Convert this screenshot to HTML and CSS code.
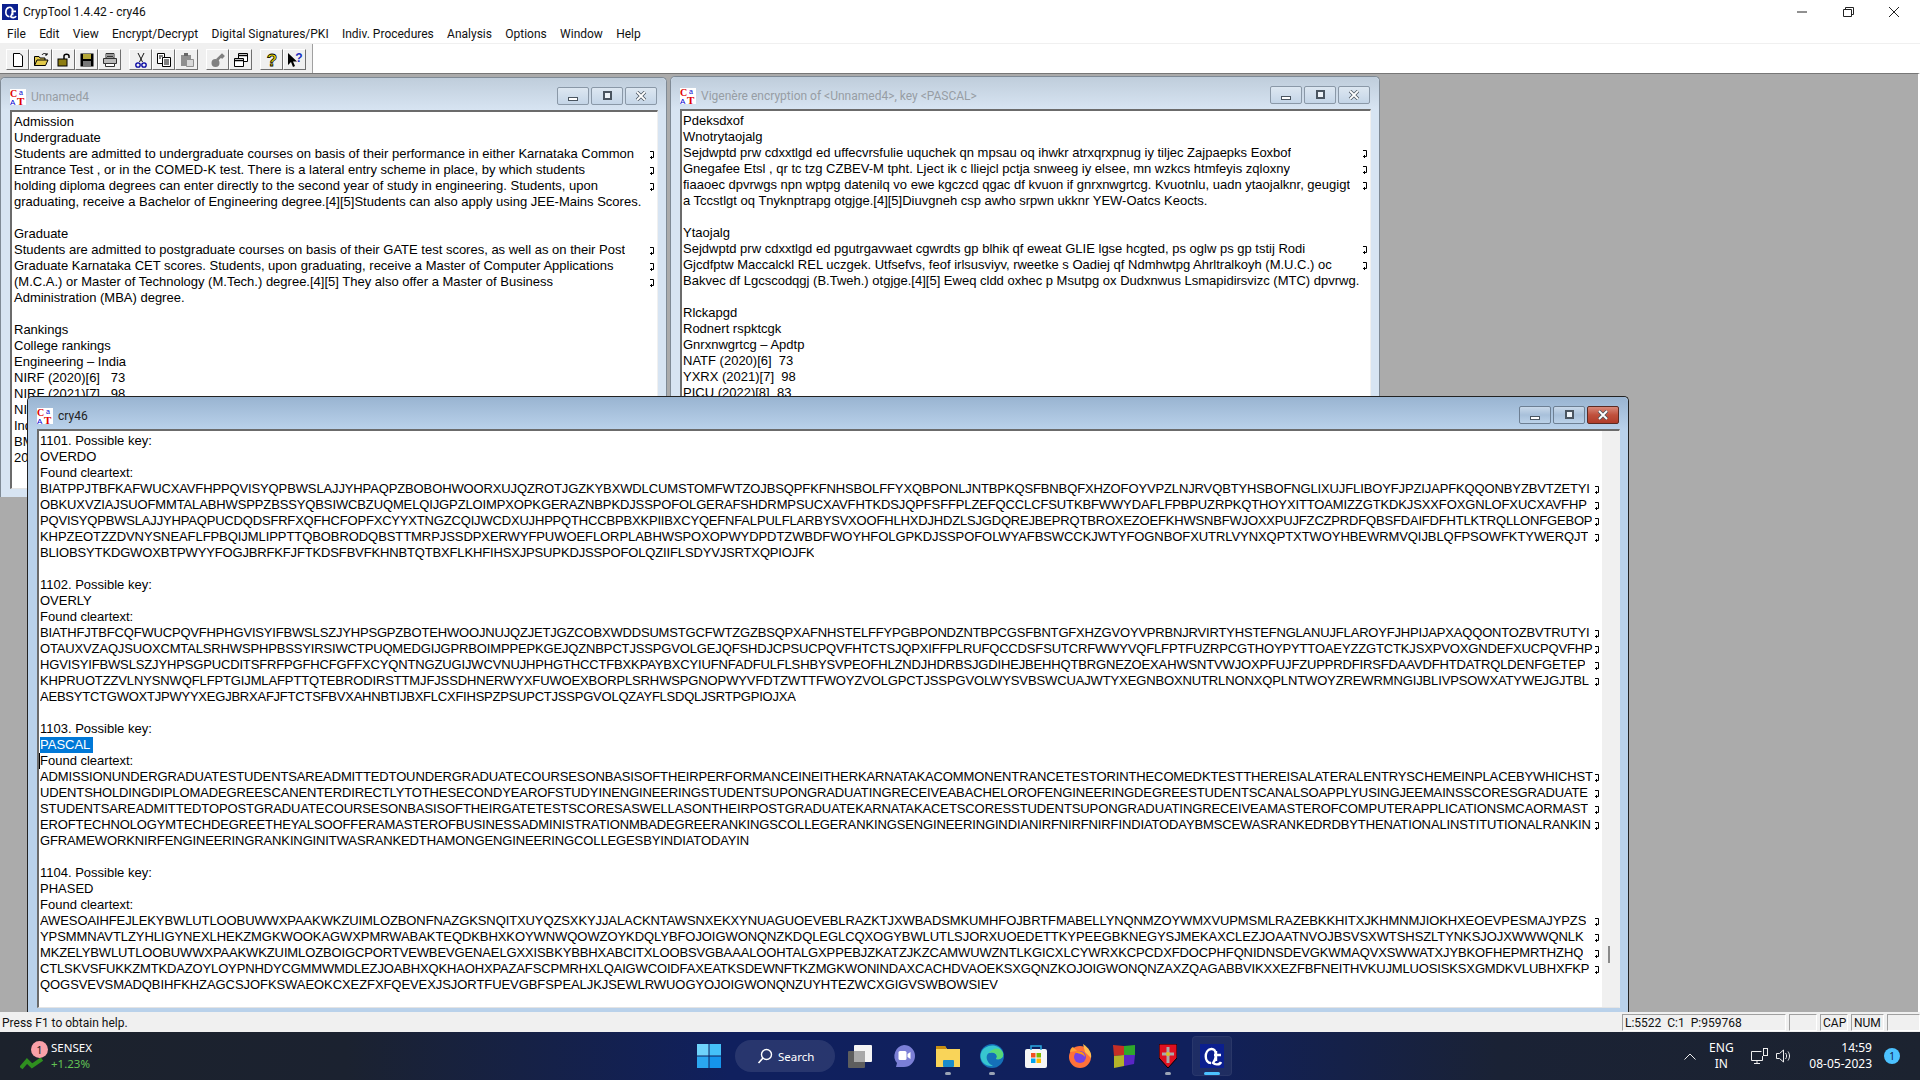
FILE: index.html
```html
<!DOCTYPE html>
<html lang="en">
<head>
    <meta charset="UTF-8">
    <title>CrypTool 1.4.42 - cry46</title>
    <link rel="stylesheet" href="styles.css">
</head>
<body>
    <svg class="defs" width="0" height="0">
        <symbol id="wrap" viewBox="0 0 6 10">
            <path d="M1 1.500H4.500V7.500H1M2.500 6V9" fill="none" stroke="#000" stroke-width="1"/>
        </symbol>
        <symbol id="cat" viewBox="0 0 16 16">
            <rect width="16" height="16" fill="#fff"/>
            <text x="0" y="8" font-family="Liberation Serif" font-weight="bold" font-size="10" fill="#e00000">C</text>
            <text x="9" y="6" font-family="Liberation Sans" font-size="7" fill="#0000d0">a</text>
            <text x="0" y="16" font-family="Liberation Sans" font-size="8" fill="#0000d0">A</text>
            <text x="7" y="16" font-family="Liberation Serif" font-weight="bold" font-size="11" fill="#e00000">T</text>
        </symbol>
        <symbol id="ctlogo" viewBox="0 0 24 24">
            <rect width="24" height="24" fill="#0b1f8f"/>
            <path d="M11 19C4 19 4 6 11 5C17 4 17 14 13 19C15 21 20 21 21 18M16 7V17M14 11H21" fill="none" stroke="#fff" stroke-width="2.400"/>
        </symbol>
        <symbol id="xmark" viewBox="0 0 12 10">
            <path d="M2 1L10 9M10 1L2 9" fill="none" stroke="#4a5560" stroke-width="3.400"/>
            <path d="M2 1L10 9M10 1L2 9" fill="none" stroke="#fff" stroke-width="1.800"/>
        </symbol>
    </svg>

    <div class="app">
        <header class="titlebar">
            <svg class="app-icon"><use href="#ctlogo"/></svg>
            <span class="app-title">CrypTool 1.4.42 - cry46</span>
            <div class="sys-btns">
                <svg width="46" height="20" viewBox="0 0 46 20"><path d="M18 10H28" stroke="#222"/></svg>
                <svg width="46" height="20" viewBox="0 0 46 20"><path d="M18.500 7.500H26.500V14.500H18.500ZM20.500 7V5.500H28.500V12.500H27" fill="none" stroke="#222"/></svg>
                <svg width="46" height="20" viewBox="0 0 46 20"><path d="M18 5L28 15M28 5L18 15" fill="none" stroke="#222"/></svg>
            </div>
        </header>

        <nav class="menubar">
            <span>File</span><span>Edit</span><span>View</span><span>Encrypt/Decrypt</span><span>Digital Signatures/PKI</span><span>Indiv. Procedures</span><span>Analysis</span><span>Options</span><span>Window</span><span>Help</span>
        </nav>

        <div class="toolbar">
            <div class="tool-group">
                <button class="tool"><svg viewBox="0 0 16 16"><path d="M3.500 1.500H10L12.500 4V14.500H3.500Z" fill="#fff" stroke="#000"/></svg></button>
                <button class="tool"><svg viewBox="0 0 16 16"><path d="M1.500 13.500V4.500H6L7 6H12V8M1.500 13.500L4 8H15L12.500 13.500Z" fill="#e2c94a" stroke="#000"/><path d="M9 3C10 1 13 1 14 3M14 3V1M14 3H12" fill="none" stroke="#000"/></svg></button>
                <button class="tool"><svg viewBox="0 0 16 16"><rect x="2" y="7" width="9" height="7" fill="#8d7d12" stroke="#000"/><path d="M8 7V4C8 1.500 13 1.500 13 4V6" fill="none" stroke="#000" stroke-width="1.500"/></svg></button>
                <button class="tool"><svg viewBox="0 0 16 16"><rect x="1.500" y="1.500" width="13" height="13" fill="#000"/><rect x="4" y="2" width="8" height="5" fill="#b5a838"/><rect x="4" y="9" width="8" height="5" fill="#777"/></svg></button>
                <button class="tool"><svg viewBox="0 0 16 16"><path d="M4 1.500H12V6H4Z" fill="#fff" stroke="#333"/><path d="M1.500 6.500H14.500V11.500H1.500Z" fill="#bbb" stroke="#333"/><path d="M3.500 11.500H12.500V14.500H3.500Z" fill="#fff" stroke="#333"/><path d="M5 3H11M5 4.500H11" stroke="#333"/></svg></button>
            </div>
            <div class="tool-group">
                <button class="tool"><svg viewBox="0 0 16 16"><path d="M5 1L9.500 10M11 1L6.500 10" stroke="#111" fill="none"/><circle cx="5" cy="13" r="2.200" fill="none" stroke="#0000a0" stroke-width="1.300"/><circle cx="11" cy="13" r="2.200" fill="none" stroke="#0000a0" stroke-width="1.300"/></svg></button>
                <button class="tool"><svg viewBox="0 0 16 16"><path d="M1.500 1.500H8.500V11.500H1.500Z" fill="#fff" stroke="#000"/><path d="M6.500 5.500H14.500V14.500H6.500Z" fill="#fff" stroke="#000"/><path d="M3 4H7M3 6H5M8 8H13M8 10H13M8 12H13" stroke="#000"/></svg></button>
                <button class="tool"><svg viewBox="0 0 16 16"><path d="M2 3H12V14H2Z" fill="#8f8f8f"/><path d="M5 1H9V4H5Z" fill="#666"/><path d="M7.500 7.500H14.500V14.500H7.500Z" fill="#d8d8d8" stroke="#8f8f8f"/></svg></button>
            </div>
            <div class="tool-group">
                <button class="tool"><svg viewBox="0 0 16 16"><circle cx="5.500" cy="11" r="4" fill="#808080"/><path d="M7 8L12 3L14 5M11 4L13 6" stroke="#808080" stroke-width="2.500" fill="none"/></svg></button>
                <button class="tool"><svg viewBox="0 0 16 16"><path d="M5.500 1.500H14.500V9.500H5.500Z" fill="#fff" stroke="#000"/><path d="M5.500 3.500H14.500" stroke="#000" stroke-width="1.500"/><path d="M1.500 6.500H10.500V14.500H1.500Z" fill="#fff" stroke="#000"/><path d="M1.500 8.500H10.500" stroke="#000" stroke-width="1.500"/></svg></button>
            </div>
            <div class="tool-group">
                <button class="tool"><svg viewBox="0 0 16 16"><text x="8" y="14" text-anchor="middle" font-family="Liberation Sans" font-weight="bold" font-size="17" fill="#f4e400" stroke="#000" stroke-width="0.800">?</text></svg></button>
                <button class="tool"><svg viewBox="0 0 16 16"><path d="M1 1V13L4 10L6 15L8 14L6 9.500H10Z" fill="#000"/><text x="12" y="10" text-anchor="middle" font-family="Liberation Sans" font-weight="bold" font-size="12" fill="#1a2ec0">?</text></svg></button>
            </div>
        </div>

        <main class="workspace">
            <!-- back window left -->
            <section class="mdi-win inactive win-unnamed">
                <div class="win-title">
                    <svg class="cat-icon"><use href="#cat"/></svg>
                    <span>Unnamed4</span>
                    <div class="win-btns">
                        <button class="win-btn min"><i></i></button><button class="win-btn max"><i></i></button><button class="win-btn close"><svg><use href="#xmark"/></svg></button>
                    </div>
                </div>
                <div class="win-body">
                    <div class="line">Admission</div>
                    <div class="line">Undergraduate</div>
                    <div class="line"><span>Students are admitted to undergraduate courses on basis of their performance in either Karnataka Common</span><svg class="mark"><use href="#wrap"/></svg></div>
                    <div class="line"><span>Entrance Test , or in the COMED-K test. There is a lateral entry scheme in place, by which students</span><svg class="mark"><use href="#wrap"/></svg></div>
                    <div class="line"><span>holding diploma degrees can enter directly to the second year of study in engineering. Students, upon</span><svg class="mark"><use href="#wrap"/></svg></div>
                    <div class="line">graduating, receive a Bachelor of Engineering degree.[4][5]Students can also apply using JEE-Mains Scores.</div>
                    <div class="line"></div>
                    <div class="line">Graduate</div>
                    <div class="line"><span>Students are admitted to postgraduate courses on basis of their GATE test scores, as well as on their Post</span><svg class="mark"><use href="#wrap"/></svg></div>
                    <div class="line"><span>Graduate Karnataka CET scores. Students, upon graduating, receive a Master of Computer Applications</span><svg class="mark"><use href="#wrap"/></svg></div>
                    <div class="line"><span>(M.C.A.) or Master of Technology (M.Tech.) degree.[4][5] They also offer a Master of Business</span><svg class="mark"><use href="#wrap"/></svg></div>
                    <div class="line">Administration (MBA) degree.</div>
                    <div class="line"></div>
                    <div class="line">Rankings</div>
                    <div class="line">College rankings</div>
                    <div class="line">Engineering – India</div>
                    <div class="line">NIRF (2020)[6]   73</div>
                    <div class="line">NIRF (2021)[7]   98</div>
                    <div class="line">NIRF (2022)[8]   83</div>
                    <div class="line">India Today</div>
                    <div class="line">BMSCE</div>
                    <div class="line">2022</div>
                </div>
            </section>

            <!-- back window right -->
            <section class="mdi-win inactive win-vigenere">
                <div class="win-title">
                    <svg class="cat-icon"><use href="#cat"/></svg>
                    <span>Vigenère encryption of &lt;Unnamed4&gt;, key &lt;PASCAL&gt;</span>
                    <div class="win-btns">
                        <button class="win-btn min"><i></i></button><button class="win-btn max"><i></i></button><button class="win-btn close"><svg><use href="#xmark"/></svg></button>
                    </div>
                </div>
                <div class="win-body">
                    <div class="line">Pdeksdxof</div>
                    <div class="line">Wnotrytaojalg</div>
                    <div class="line"><span>Sejdwptd prw cdxxtlgd ed uffecvrsfulie uquchek qn mpsau oq ihwkr atrxqrxpnug iy tiljec Zajpaepks Eoxbof</span><svg class="mark"><use href="#wrap"/></svg></div>
                    <div class="line"><span>Gnegafee Etsl , qr tc tzg CZBEV-M tpht. Lject ik c lliejcl pctja snweeg iy elsee, mn wzkcs htmfeyis zqloxny</span><svg class="mark"><use href="#wrap"/></svg></div>
                    <div class="line"><span>fiaaoec dpvrwgs npn wptpg datenilq vo ewe kgczcd qgac df kvuon if gnrxnwgrtcg. Kvuotnlu, uadn ytaojalknr, geugigt</span><svg class="mark"><use href="#wrap"/></svg></div>
                    <div class="line">a Tccstlgt oq Tnyknptrapg otgjge.[4][5]Diuvgneh csp awho srpwn ukknr YEW-Oatcs Keocts.</div>
                    <div class="line"></div>
                    <div class="line">Ytaojalg</div>
                    <div class="line"><span>Sejdwptd prw cdxxtlgd ed pgutrgavwaet cgwrdts gp blhik qf eweat GLIE lgse hcgted, ps oglw ps gp tstij Rodi</span><svg class="mark"><use href="#wrap"/></svg></div>
                    <div class="line"><span>Gjcdfptw Maccalckl REL uczgek. Utfsefvs, feof irlsusviyv, rweetke s Oadiej qf Ndmhwtpg Ahrltralkoyh (M.U.C.) oc</span><svg class="mark"><use href="#wrap"/></svg></div>
                    <div class="line">Bakvec df Lgcscodqgj (B.Tweh.) otgjge.[4][5] Eweq cldd oxhec p Msutpg ox Dudxnwus Lsmapidirsvizc (MTC) dpvrwg.</div>
                    <div class="line"></div>
                    <div class="line">Rlckapgd</div>
                    <div class="line">Rodnert rspktcgk</div>
                    <div class="line">Gnrxnwgrtcg – Apdtp</div>
                    <div class="line">NATF (2020)[6]  73</div>
                    <div class="line">YXRX (2021)[7]  98</div>
                    <div class="line">PICU (2022)[8]  83</div>
                </div>
            </section>

            <!-- active window -->
            <section class="mdi-win win-cry">
                <div class="win-title">
                    <svg class="cat-icon"><use href="#cat"/></svg>
                    <span>cry46</span>
                    <div class="win-btns">
                        <button class="win-btn min"><i></i></button><button class="win-btn max"><i></i></button><button class="win-btn close"><svg><use href="#xmark"/></svg></button>
                    </div>
                </div>
                <div class="win-body has-scroll">
                    <div class="scroll-text">
                        <div class="line">1101. Possible key:</div>
                        <div class="line">OVERDO</div>
                        <div class="line">Found cleartext:</div>
                        <div class="line"><span class="fit-c">BIATPPJTBFKAFWUCXAVFHPPQVISYQPBWSLAJJYHPAQPZBOBOHWOORXUJQZROTJGZKYBXWDLCUMSTOMFWTZOJBSQPFKFNHSBOLFFYXQBPONLJNTBPKQSFBNBQFXHZOFOYVPZLNJRVQBTYHSBOFNGLIXUJFLIBOYFJPZIJAPFKQQONBYZBVTZETYI</span><svg class="mark"><use href="#wrap"/></svg></div>
                        <div class="line"><span class="fit-c">OBKUXVZIAJSUOFMMTALABHWSPPZBSSYQBSIWCBZUQMELQIJGPZLOIMPXOPKGERAZNBPKDJSSPOFOLGERAFSHDRMPSUCXAVFHTKDSJQPFSFFPLZEFQCCLCFSUTKBFWWYDAFLFPBPUZRPKQTHOYXITTOAMIZZGTKDKJSXXFOXGNLOFXUCXAVFHP</span><svg class="mark"><use href="#wrap"/></svg></div>
                        <div class="line"><span class="fit-e">PQVISYQPBWSLAJJYHPAQPUCDQDSFRFXQFHCFOPFXCYYXTNGZCQIJWCDXUJHPPQTHCCBPBXKPIIBXCYQEFNFALPULFLARBYSVXOOFHLHXDJHDZLSJGDQREJBEPRQTBROXEZOEFKHWSNBFWJOXXPUJFZCZPRDFQBSFDAIFDFHTLKTRQLLONFGEBOP</span><svg class="mark"><use href="#wrap"/></svg></div>
                        <div class="line"><span class="fit-a">KHPZEOTZZDVNYSNEAFLFPBQIJMLIPPTTQBOBRODQBSTTMRPJSSDPXERWYFPUWOEFLORPLABHWSPOXOPWYDPDTZWBDFWOYHFOLGPKDJSSPOFOLWYAFBSWCCKJWTYFOGNBOFXUTRLVYNXQPTXTWOYHBEWRMVQIJBLQFPSOWFKTYWERQJT</span><svg class="mark"><use href="#wrap"/></svg></div>
                        <div class="line"><span class="fit-d">BLIOBSYTKDGWOXBTPWYYFOGJBRFKFJFTKDSFBVFKHNBTQTBXFLKHFIHSXJPSUPKDJSSPOFOLQZIIFLSDYVJSRTXQPIOJFK</span></div>
                        <div class="line"></div>
                        <div class="line">1102. Possible key:</div>
                        <div class="line">OVERLY</div>
                        <div class="line">Found cleartext:</div>
                        <div class="line"><span class="fit-e">BIATHFJTBFCQFWUCPQVFHPHGVISYIFBWSLSZJYHPSGPZBOTEHWOOJNUJQZJETJGZCOBXWDDSUMSTGCFWTZGZBSQPXAFNHSTELFFYPGBPONDZNTBPCGSFBNTGFXHZGVOYVPRBNJRVIRTYHSTEFNGLANUJFLAROYFJHPIJAPXAQQONTOZBVTRUTYI</span><svg class="mark"><use href="#wrap"/></svg></div>
                        <div class="line"><span class="fit-d">OTAUXVZAQJSUOXCMTALSRHWSPHPBSSYIRSIWCTPUQMEDGIJGPRBOIMPPEPKGEJQZNBPCTJSSPGVOLGEJQFSHDJCPSUCPQVFHTCTSJQPXIFFPLRUFQCCDSFSUTCRFWWYVQFLFPTFUZRPCGTHOYPYTTOAEYZZGTCTKJSXPVOXGNDEFXUCPQVFHP</span><svg class="mark"><use href="#wrap"/></svg></div>
                        <div class="line"><span class="fit-d">HGVISYIFBWSLSZJYHPSGPUCDITSFRFPGFHCFGFFXCYQNTNGZUGIJWCVNUJHPHGTHCCTFBXKPAYBXCYIUFNFADFULFLSHBYSVPEOFHLZNDJHDRBSJGDIHEJBEHHQTBRGNEZOEXAHWSNTVWJOXPFUJFZUPPRDFIRSFDAAVDFHTDATRQLDENFGETEP</span><svg class="mark"><use href="#wrap"/></svg></div>
                        <div class="line"><span class="fit-c">KHPRUOTZZVLNYSNWQFLFPTGIJMLAFPTTQTEBRODIRSTTMJFJSSDHNERWYXFUWOEXBORPLSRHWSPGNOPWYVFDTZWTTFWOYZVOLGPCTJSSPGVOLWYSVBSWCUAJWTYXEGNBOXNUTRLNONXQPLNTWOYZREWRMNGIJBLIVPSOWXATYWEJGJTBL</span><svg class="mark"><use href="#wrap"/></svg></div>
                        <div class="line"><span class="fit-f">AEBSYTCTGWOXTJPWYYXEGJBRXAFJFTCTSFBVXAHNBTIJBXFLCXFIHSPZPSUPCTJSSPGVOLQZAYFLSDQLJSRTPGPIOJXA</span></div>
                        <div class="line"></div>
                        <div class="line">1103. Possible key:</div>
                        <div class="line"><mark class="sel">PASCAL </mark></div>
                        <div class="line caret">Found cleartext:</div>
                        <div class="line"><span class="fit-c">ADMISSIONUNDERGRADUATESTUDENTSAREADMITTEDTOUNDERGRADUATECOURSESONBASISOFTHEIRPERFORMANCEINEITHERKARNATAKACOMMONENTRANCETESTORINTHECOMEDKTESTTHEREISALATERALENTRYSCHEMEINPLACEBYWHICHST</span><svg class="mark"><use href="#wrap"/></svg></div>
                        <div class="line"><span class="fit-c">UDENTSHOLDINGDIPLOMADEGREESCANENTERDIRECTLYTOTHESECONDYEAROFSTUDYINENGINEERINGSTUDENTSUPONGRADUATINGRECEIVEABACHELOROFENGINEERINGDEGREESTUDENTSCANALSOAPPLYUSINGJEEMAINSSCORESGRADUATE</span><svg class="mark"><use href="#wrap"/></svg></div>
                        <div class="line"><span class="fit-b">STUDENTSAREADMITTEDTOPOSTGRADUATECOURSESONBASISOFTHEIRGATETESTSCORESASWELLASONTHEIRPOSTGRADUATEKARNATAKACETSCORESSTUDENTSUPONGRADUATINGRECEIVEAMASTEROFCOMPUTERAPPLICATIONSMCAORMAST</span><svg class="mark"><use href="#wrap"/></svg></div>
                        <div class="line"><span class="fit-c">EROFTECHNOLOGYMTECHDEGREETHEYALSOOFFERAMASTEROFBUSINESSADMINISTRATIONMBADEGREERANKINGSCOLLEGERANKINGSENGINEERINGINDIANIRFNIRFNIRFINDIATODAYBMSCEWASRANKEDRDBYTHENATIONALINSTITUTIONALRANKIN</span><svg class="mark"><use href="#wrap"/></svg></div>
                        <div class="line"><span class="fit-c">GFRAMEWORKNIRFENGINEERINGRANKINGINITWASRANKEDTHAMONGENGINEERINGCOLLEGESBYINDIATODAYIN</span></div>
                        <div class="line"></div>
                        <div class="line">1104. Possible key:</div>
                        <div class="line">PHASED</div>
                        <div class="line">Found cleartext:</div>
                        <div class="line"><span class="fit-b">AWESOAIHFEJLEKYBWLUTLOOBUWWXPAAKWKZUIMLOZBONFNAZGKSNQITXUYQZSXKYJJALACKNTAWSNXEKXYNUAGUOEVEBLRAZKTJXWBADSMKUMHFOJBRTFMABELLYNQNMZOYWMXVUPMSMLRAZEBKKHITXJKHMNMJIOKHXEOEVPESMAJYPZS</span><svg class="mark"><use href="#wrap"/></svg></div>
                        <div class="line"><span class="fit-a">YPSMMNAVTLZYHLIGYNEXLHEKZMGKWOOKAGWXPMRWABAKTEQDKBHXKOYWNWQOWZOYKDQLYBFOJOIGWONQNZKDQLEGLCQXOGYBWLUTLSJORXUOEDETTKYPEEGBKNEGYSJMEKAXCLEZJOAATNVOJBSVSXWTSHSZLTYNKSJOJXWWWQNLK</span><svg class="mark"><use href="#wrap"/></svg></div>
                        <div class="line"><span class="fit-c">MKZELYBWLUTLOOBUWWXPAAKWKZUIMLOZBOIGCPORTVEWBEVGENAELGXXISBKYBBHXABCITXLOOBSVGBAAALOOHTALGXPPEBJZKATZJKZCAMWUWZNTLKGICXLCYWRXKCPCDXFDOCPHFQNIDNSDEVGKWMAQVXSWWATXJYBKOFHEPMRTHZHQ</span><svg class="mark"><use href="#wrap"/></svg></div>
                        <div class="line"><span class="fit-d">CTLSKVSFUKKZMTKDAZOYLOYPNHDYCGMMWMDLEZJOABHXQKHAOHXPAZAFSCPMRHXLQAIGWCOIDFAXEATKSDEWNFTKZMGKWONINDAXCACHDVAOEKSXGQNZKOJOIGWONQNZAXZQAGABBVIKXXEZFBFNEITHVKUJMLUOSISKSXGMDKVLUBHXFKP</span><svg class="mark"><use href="#wrap"/></svg></div>
                        <div class="line"><span class="fit-a">QOGSVEVSMADQBIHFKHZAGCSJOFKSWAEOKCXEZFXFQEVEXJSJORTFUEVGBFSPEALJKJSEWLRWUOGYOJOIGWONQNZUYHTEZWCXGIGVSWBOWSIEV</span></div>
                    </div>
                    <div class="scrollbar"><div class="thumb"></div></div>
                </div>
            </section>
        </main>

        <footer class="statusbar">
            <span class="status-msg">Press F1 to obtain help.</span>
            <span class="panel p-pos">L:5522&nbsp;&nbsp;C:1&nbsp;&nbsp;P:959768</span>
            <span class="panel p-blank"></span>
            <span class="panel p-cap">CAP</span>
            <span class="panel p-num">NUM</span>
            <span class="panel p-last"></span>
        </footer>

        <div class="taskbar">
            <div class="widget">
                <div class="widget-icon">
                    <svg width="24" height="14" viewBox="0 0 24 14"><path d="M1 12L7 5L12 10L22 3" fill="none" stroke="#2f8f1f" stroke-width="4"/></svg>
                    <span class="widget-badge">1</span>
                </div>
                <div class="widget-text">
                    <span>SENSEX</span>
                    <span class="up">+1.23%</span>
                </div>
            </div>

            <div class="task-center">
                <div class="task-item">
                    <svg width="24" height="24" viewBox="0 0 24 24"><rect width="11.500" height="11.500" fill="#6fd3fb"/><rect x="12.500" width="11.500" height="11.500" fill="#45c0f9"/><rect y="12.500" width="11.500" height="11.500" fill="#2aa6f0"/><rect x="12.500" y="12.500" width="11.500" height="11.500" fill="#1594ec"/></svg>
                </div>
                <div class="search-pill">
                    <svg width="16" height="16" viewBox="0 0 16 16"><circle cx="9.500" cy="6.500" r="5" fill="none" stroke="#fff" stroke-width="1.400"/><path d="M6 10L1.500 15" stroke="#fff" stroke-width="1.600"/></svg>
                    <span>Search</span>
                </div>
                <div class="task-item">
                    <svg width="24" height="24" viewBox="0 0 24 24"><rect y="7" width="17" height="17" rx="1" fill="#5e5e5e"/><rect x="6" y="1" width="18" height="17" rx="1" fill="#f4f4f4"/><rect x="6" y="7" width="11" height="11" fill="#a9a9a9"/></svg>
                </div>
                <div class="task-item">
                    <svg width="24" height="24" viewBox="0 0 24 24"><path d="M12 1A11 11 0 1 1 12 23H4L5 19A11 11 0 0 1 12 1Z" fill="#7b7fd6"/><rect x="6.500" y="7" width="8" height="9" rx="1.500" fill="#fff"/><path d="M15.500 10L18.500 8V15L15.500 13Z" fill="#fff"/></svg>
                </div>
                <div class="task-item has-dot">
                    <svg width="24" height="24" viewBox="0 0 24 24"><path d="M0 2H9L11 5H24V23H0Z" fill="#f9d459"/><path d="M0 2H9L11 5H0Z" fill="#c98f12"/><rect x="7" y="16" width="11" height="7" rx="1" fill="#1a8ccc"/></svg>
                    <i class="dot"></i>
                </div>
                <div class="task-item has-dot">
                    <svg width="24" height="24" viewBox="0 0 24 24"><circle cx="12" cy="12" r="12" fill="#1570b8"/><path d="M1 9C4 0 19 -2 23 9C24 14 20 16 16 15C19 11 14 7 9 9C5 11 6 19 13 22C4 23 -1 16 1 9Z" fill="#37c6d0"/><path d="M23 9C24 14 20 16 16 15C19 11 14 7 9 9C13 3 21 3 23 9Z" fill="#57d977"/></svg>
                    <i class="dot"></i>
                </div>
                <div class="task-item">
                    <svg width="24" height="24" viewBox="0 0 24 24"><rect x="1" y="5" width="22" height="19" rx="2" fill="#f6f6f6"/><path d="M7 6V2H17V6" fill="none" stroke="#2aa8e0" stroke-width="1.500"/><rect x="7" y="9" width="4.500" height="4.500" fill="#f25022"/><rect x="12.500" y="9" width="4.500" height="4.500" fill="#7fba00"/><rect x="7" y="14.500" width="4.500" height="4.500" fill="#00a4ef"/><rect x="12.500" y="14.500" width="4.500" height="4.500" fill="#ffb900"/></svg>
                </div>
                <div class="task-item">
                    <svg width="24" height="24" viewBox="0 0 24 24"><circle cx="12" cy="13" r="11" fill="#ff7139"/><path d="M15 0C21 4 24 9 23 14L17 8Z" fill="#ffbd4f"/><path d="M2 8C2 4 5 3 5 3L9 7Z" fill="#ffa436"/><circle cx="12" cy="13" r="6" fill="#7542e5"/><path d="M7 8C11 6 17 8 17 13C14 9 10 10 7 8Z" fill="#ff980e"/></svg>
                </div>
                <div class="task-item">
                    <svg width="24" height="24" viewBox="0 0 24 24"><path d="M1 1L12 2V11L2 12Z" fill="#c62f25"/><path d="M12 2L23 1V11L12 11Z" fill="#2fa82a"/><path d="M2 12L12 11V22L2 24Z" fill="#b4b32a"/><path d="M12 11H23L22 20L12 22Z" fill="#5a26c4"/></svg>
                </div>
                <div class="task-item has-dot">
                    <svg width="18" height="24" viewBox="0 0 18 24"><path d="M0 0H18V14L9 24L0 14Z" fill="#e01020" stroke="#000"/><path d="M9 3V19M3 10H15" stroke="#aaa" stroke-width="3"/><circle cx="9" cy="10" r="2" fill="#e0c020"/></svg>
                    <i class="dot"></i>
                </div>
                <div class="task-item active">
                    <svg width="24" height="24"><use href="#ctlogo"/></svg>
                    <i class="dot wide"></i>
                </div>
            </div>

            <div class="tray">
                <svg class="tray-caret" width="12" height="7" viewBox="0 0 12 7"><path d="M0.500 6.500L6 1L11.500 6.500" fill="none" stroke="#eee"/></svg>
                <div class="tray-lang"><span>ENG</span><span>IN</span></div>
                <svg class="tray-net" width="17" height="16" viewBox="0 0 17 16"><path d="M10.500 3.500H0.500V12.500H11.500V8M3 15.500H9M6 13V15" fill="none" stroke="#eee"/><rect x="12.500" y="0.500" width="4" height="7" fill="none" stroke="#eee"/></svg>
                <svg class="tray-vol" width="16" height="14" viewBox="0 0 16 14"><path d="M0.500 4.500H3.500L7.500 1V13L3.500 9.500H0.500Z" fill="none" stroke="#eee"/><path d="M9.500 4C11 6 11 8 9.500 10M12 2.500C14 5.500 14 8.500 12 11.500" fill="none" stroke="#eee"/></svg>
                <div class="tray-clock"><span>14:59</span><span>08-05-2023</span></div>
                <span class="tray-badge">1</span>
            </div>
        </div>
    </div>
</body>
</html>
```

FILE: styles.css
```css
* {
    box-sizing: border-box;
}

html, body {
    margin: 0;
    height: 100%;
    overflow: hidden;
}

body {
    font-family: "Liberation Sans", Arial, sans-serif;
    font-size: 13px;
    color: #000;
    background: #fff;
}

.defs {
    position: absolute;
}

.app {
    display: flex;
    flex-direction: column;
    width: 1920px;
    height: 1080px;
}

/* top of the main window */
.titlebar {
    display: flex;
    align-items: center;
    height: 24px;
    padding-left: 2px;
    flex: none;
    background: #fff;
}

.app-icon {
    width: 16px;
    height: 16px;
    margin-right: 5px;
}

.app-title {
    font-family: Roboto, sans-serif;
    font-size: 12px;
    color: #111;
}

.sys-btns {
    display: flex;
    margin-left: auto;
    margin-right: 3px;
    gap: 0;
}

.menubar {
    display: flex;
    align-items: center;
    gap: 13.300px;
    height: 20px;
    padding-left: 7px;
    flex: none;
    font-family: Roboto, sans-serif;
    font-size: 12px;
    color: #111;
    background: #fff;
    border-bottom: 1px solid #f0f0f0;
}

.toolbar {
    display: flex;
    align-items: center;
    gap: 8px;
    width: 313px;
    height: 29px;
    padding: 2px 0 0 6px;
    flex: none;
    background: #f0f0f0;
    border-right: 1px solid #a0a0a0;
    box-shadow: 1607px 0 0 #fff;
}

.tool-group {
    display: flex;
}

.tool {
    display: flex;
    align-items: center;
    justify-content: center;
    width: 23px;
    height: 21px;
    padding: 0;
    background: #f0f0f0;
    border: 1px solid;
    border-color: #fff #6f6f6f #6f6f6f #fff;
}

.tool svg {
    width: 16px;
    height: 16px;
}

/* MDI area */
.workspace {
    position: relative;
    flex: none;
    height: 939px;
    overflow: hidden;
    background: #ababab;
    border-top: 1px solid #777;
    border-right: 2px solid #fff;
}

.mdi-win {
    position: absolute;
    display: flex;
    flex-direction: column;
    padding: 0 8px 8px 9px;
    background: #b9d1ea;
    border: 1px solid #222;
    border-bottom: none;
    border-radius: 5px 5px 0 0;
}

.mdi-win.inactive {
    background: #d7e4f2;
    border-color: #7f8a95;
}

.win-unnamed {
    top: 3px;
    left: 0;
    width: 667px;
    height: 420px;
}

.win-vigenere {
    top: 2px;
    left: 670px;
    width: 710px;
    height: 400px;
}

.win-cry {
    top: 322px;
    left: 27px;
    width: 1602px;
    height: 620px;
    padding-right: 8px;
}

.win-title {
    display: flex;
    align-items: center;
    gap: 5px;
    height: 32px;
    margin: 0 -8px 0 -9px;
    padding: 6px 9px 0 9px;
    flex: none;
    font-family: Roboto, sans-serif;
    font-size: 12px;
    color: #222;
    background: linear-gradient(#99b4d1, #b9d1ea);
    border-radius: 5px 5px 0 0;
}

.inactive .win-title {
    color: #979da4;
    background: linear-gradient(#bfcddb, #d7e4f2);
}

.cat-icon {
    width: 16px;
    height: 16px;
}

.win-btns {
    display: flex;
    gap: 2px;
    margin-left: auto;
    margin-top: -2px;
}

.win-btn {
    display: flex;
    align-items: center;
    justify-content: center;
    width: 32px;
    height: 18px;
    padding: 0;
    background: linear-gradient(#c9d9ea 0, #a8c0da 50%, #bcd2e9 100%);
    border: 1px solid #6d7f93;
    border-radius: 2px;
}

.inactive .win-btn {
    background: linear-gradient(#dde7f1, #c4d5e7);
    border-color: #8a98a7;
}

.win-btn svg {
    width: 12px;
    height: 10px;
}

.win-btn i {
    display: block;
    border: 2px solid #4a5560;
}

.win-btn.min i {
    width: 10px;
    height: 4px;
    margin-top: 5px;
    border-width: 1px;
    background: #fff;
}

.win-btn.max i {
    width: 9px;
    height: 9px;
    margin-top: -1px;
    background: #eef3f8;
}

.win-cry .win-btn.close {
    background: linear-gradient(#d8897a 0, #c0503c 50%, #b03c2a 100%);
    border-color: #5c2a22;
}

.win-body {
    flex: 1;
    min-height: 0;
    padding: 2px 2px 0 2px;
    overflow: hidden;
    background: #fff;
    border-style: solid;
    border-width: 2px 1px 1px 2px;
    border-color: #6b6b6b #f0f0f0 #e4e4e4 #6b6b6b;
}

.win-vigenere .win-body {
    padding-left: 1px;
}

.win-body.has-scroll {
    display: flex;
    padding: 0;
}

.scroll-text {
    flex: 1;
    min-width: 0;
    padding: 2px 2px 0 1px;
}

/* rows of ciphertext, fitted by eye so each one ends where the screenshot's does */
.fit-a {
    letter-spacing: -0.070px;
}

.fit-b {
    letter-spacing: -0.100px;
}

.fit-c {
    letter-spacing: -0.125px;
}

.fit-d {
    letter-spacing: -0.150px;
}

.fit-e {
    letter-spacing: -0.180px;
}

.fit-f {
    letter-spacing: -0.230px;
}

.scrollbar {
    position: relative;
    width: 17px;
    flex: none;
    background: #f0f0f0;
}

/* sits over the track, about two thirds of the way down */
.thumb {
    position: absolute;
    top: 515px;
    left: 6px;
    width: 2px;
    height: 17px;
    background: #8a8a8a;
}

.line {
    display: flex;
    justify-content: space-between;
    align-items: center;
    height: 16px;
    line-height: 16px;
    white-space: pre;
}

.line span {
    overflow: hidden;
}

.mark {
    flex: none;
    width: 6px;
    height: 10px;
    margin: 2px 0 0 0;
}

.sel {
    color: #fff;
    background: #0078d7;
}

.caret {
    box-shadow: -1px 0 0 #000;
}

/* status row */
.statusbar {
    display: flex;
    align-items: center;
    height: 20px;
    padding: 1px 0 0 2px;
    flex: none;
    font-family: Roboto, sans-serif;
    font-size: 12px;
    color: #111;
    background: #f0f0f0;
}

.status-msg {
    width: 1620px;
}

.panel {
    height: 17px;
    margin-right: 3px;
    padding-left: 2px;
    line-height: 17px;
    border: 1px solid;
    border-color: #a0a0a0 #fff #fff #a0a0a0;
}

.p-pos {
    width: 164px;
}

.p-blank {
    width: 28px;
}

.p-cap {
    width: 28px;
}

.p-num {
    width: 33px;
}

.p-last {
    width: 33px;
    margin-right: 0;
}

/* windows taskbar */
.taskbar {
    position: relative;
    display: flex;
    align-items: center;
    flex: 1;
    font-family: "Noto Sans", sans-serif;
    color: #fff;
    background: linear-gradient(90deg, #1c222c 0, #1b2230 18%, #10205e 38%, #10205c 62%, #1a2235 78%, #1c2330 100%);
}

.widget {
    display: flex;
    align-items: center;
    width: 200px;
    padding-left: 20px;
    gap: 7px;
}

.widget-icon {
    position: relative;
    width: 24px;
    height: 28px;
    display: flex;
    align-items: flex-end;
}

.widget-badge {
    position: absolute;
    top: -1px;
    left: 11px;
    width: 17px;
    height: 17px;
    font-size: 11px;
    line-height: 17px;
    text-align: center;
    color: #222;
    background: #f9a0a8;
    border-radius: 50%;
}

.widget-text {
    display: flex;
    flex-direction: column;
    font-size: 11.500px;
    line-height: 16px;
}

.widget-text .up {
    color: #62c254;
}

.task-center {
    display: flex;
    align-items: center;
    margin-left: 487px;
}

.task-item {
    position: relative;
    display: flex;
    align-items: center;
    justify-content: center;
    width: 44px;
    height: 40px;
    border-radius: 4px;
}

.task-item.active {
    width: 40px;
    margin-left: 2px;
    background: rgba(255, 255, 255, 0.06);
    box-shadow: inset 0 0 0 1px rgba(255, 255, 255, 0.05);
}

.dot {
    position: absolute;
    left: 50%;
    bottom: 1px;
    width: 6px;
    height: 3px;
    margin-left: -3px;
    background: #9aa3b5;
    border-radius: 2px;
}

.dot.wide {
    width: 16px;
    margin-left: -8px;
    background: #4cc2ff;
}

.search-pill {
    display: flex;
    align-items: center;
    gap: 5px;
    width: 100px;
    height: 32px;
    margin: 0 3px 0 4px;
    padding-left: 22px;
    font-size: 11.500px;
    background: rgba(255, 255, 255, 0.1);
    border-radius: 16px;
}

.tray {
    position: absolute;
    top: 0;
    right: 0;
    bottom: 0;
    display: flex;
    align-items: center;
    font-size: 12px;
}

.tray-caret {
    margin-right: 13px;
}

.tray-lang {
    display: flex;
    flex-direction: column;
    align-items: center;
    width: 24px;
    margin-right: 18px;
    line-height: 16px;
}

.tray-net {
    margin-right: 8px;
}

.tray-vol {
    margin-right: 17px;
}

.tray-clock {
    display: flex;
    flex-direction: column;
    align-items: flex-end;
    line-height: 16px;
    margin-right: 12px;
}

.tray-badge {
    width: 16px;
    height: 16px;
    margin-right: 20px;
    font-size: 10px;
    line-height: 16px;
    text-align: center;
    color: #10204a;
    background: #4cc2ff;
    border-radius: 50%;
}
```
